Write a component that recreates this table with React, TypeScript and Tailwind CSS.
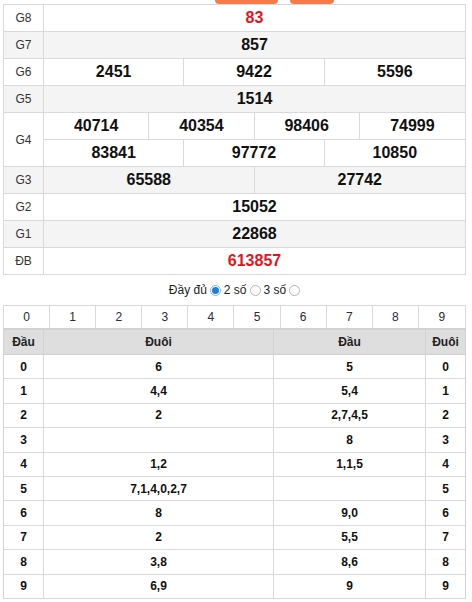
import React from 'react'

const prizes: { label: string; rows: string[][]; red?: boolean }[] = [
  { label: 'G8', rows: [['83']], red: true },
  { label: 'G7', rows: [['857']] },
  { label: 'G6', rows: [['2451', '9422', '5596']] },
  { label: 'G5', rows: [['1514']] },
  { label: 'G4', rows: [['40714', '40354', '98406', '74999'], ['83841', '97772', '10850']] },
  { label: 'G3', rows: [['65588', '27742']] },
  { label: 'G2', rows: [['15052']] },
  { label: 'G1', rows: [['22868']] },
  { label: 'ĐB', rows: [['613857']], red: true },
]

const loto: [string, string][] = [
  ['6', '5'],
  ['4,4', '5,4'],
  ['2', '2,7,4,5'],
  ['', '8'],
  ['1,2', '1,1,5'],
  ['7,1,4,0,2,7', ''],
  ['8', '9,0'],
  ['2', '5,5'],
  ['3,8', '8,6'],
  ['6,9', '9'],
]

const gridCols: Record<number, string> = {
  1: 'grid-cols-1',
  2: 'grid-cols-2',
  3: 'grid-cols-3',
  4: 'grid-cols-4',
}

function Radio({ checked }: { checked?: boolean }) {
  return checked ? (
    <span className="inline-flex h-[11px] w-[11px] items-center justify-center rounded-full border border-[#7cb8ec] bg-white">
      <span className="h-[7px] w-[7px] rounded-full bg-[#1e7fd8]" />
    </span>
  ) : (
    <span className="inline-block h-[11px] w-[11px] rounded-full border border-[#b5b5b5] bg-white" />
  )
}

export default function App() {
  return (
    <div className="h-[602px] w-[472px] overflow-hidden bg-white font-['Liberation_Sans',Arial,sans-serif] text-[#222]">
      {/* Tabs above (cut off) */}
      <div className="flex h-[4px] gap-[12px] pl-[215px]">
        <div className="h-[4px] w-[63px] rounded-b-[6px] bg-[#f97a47]" />
        <div className="h-[4px] w-[44px] rounded-b-[6px] bg-[#f97a47]" />
      </div>

      <div className="ml-[3px] w-[463px]">
        {/* Results */}
        <div className="border-x border-t border-[#d9d9d9]">
          {prizes.map((p, i) => (
            <div
              key={p.label}
              className={`flex border-b border-[#d9d9d9] ${i % 2 === 1 ? 'bg-[#f4f4f4]' : 'bg-white'}`}
            >
              <div className="flex w-[40px] shrink-0 items-center justify-center border-r border-[#d9d9d9] text-[12px] text-[#333]">
                {p.label}
              </div>
              <div className="flex-1">
                {p.rows.map((r, ri) => (
                  <div
                    key={ri}
                    className={`grid h-[26px] ${gridCols[r.length]} ${ri < p.rows.length - 1 ? 'h-[27px] border-b border-[#d9d9d9]' : ''}`}
                  >
                    {r.map((n, ni) => (
                      <div
                        key={ni}
                        className={`flex items-center justify-center text-[16px] font-bold ${p.red ? 'text-[#e3141c]' : 'text-[#111]'} ${ni < r.length - 1 ? 'border-r border-[#d9d9d9]' : ''}`}
                      >
                        {n}
                      </div>
                    ))}
                  </div>
                ))}
              </div>
            </div>
          ))}
        </div>

        {/* Options */}
        <div className="flex h-[30px] items-center justify-center gap-[3px] text-[12px] text-[#222]">
          <span>Đầy đủ</span>
          <Radio checked />
          <span>2 số</span>
          <Radio />
          <span>3 số</span>
          <Radio />
        </div>

        {/* Digits */}
        <div className="grid h-[23px] grid-cols-10 border-x border-t border-[#d9d9d9]">
          {['0', '1', '2', '3', '4', '5', '6', '7', '8', '9'].map((d, i) => (
            <div
              key={d}
              className={`flex items-center justify-center text-[12px] text-[#2a2a3a] ${i < 9 ? 'border-r border-[#d9d9d9]' : ''}`}
            >
              {d}
            </div>
          ))}
        </div>

        {/* Loto table */}
        <div className="border-x border-t-2 border-[#d2d2d2]">
          <div className="flex h-[25px] border-b border-[#d2d2d2] bg-[#dedede] text-[12px] font-bold text-[#222]">
            <div className="flex w-[40px] items-center justify-center border-r border-[#d2d2d2]">Đầu</div>
            <div className="flex w-[230px] items-center justify-center border-r border-[#d2d2d2]">Đuôi</div>
            <div className="flex w-[152px] items-center justify-center border-r border-[#d2d2d2]">Đầu</div>
            <div className="flex flex-1 items-center justify-center">Đuôi</div>
          </div>
          {loto.map(([tail, head], i) => (
            <div key={i} className="flex h-[24.4px] border-b border-[#d9d9d9] text-[12px] font-bold text-[#111]">
              <div className="flex w-[40px] items-center justify-center border-r border-[#d9d9d9]">{i}</div>
              <div className="flex w-[230px] items-center justify-center border-r border-[#d9d9d9]">{tail}</div>
              <div className="flex w-[152px] items-center justify-center border-r border-[#d9d9d9]">{head}</div>
              <div className="flex flex-1 items-center justify-center">{i}</div>
            </div>
          ))}
        </div>
      </div>
    </div>
  )
}
